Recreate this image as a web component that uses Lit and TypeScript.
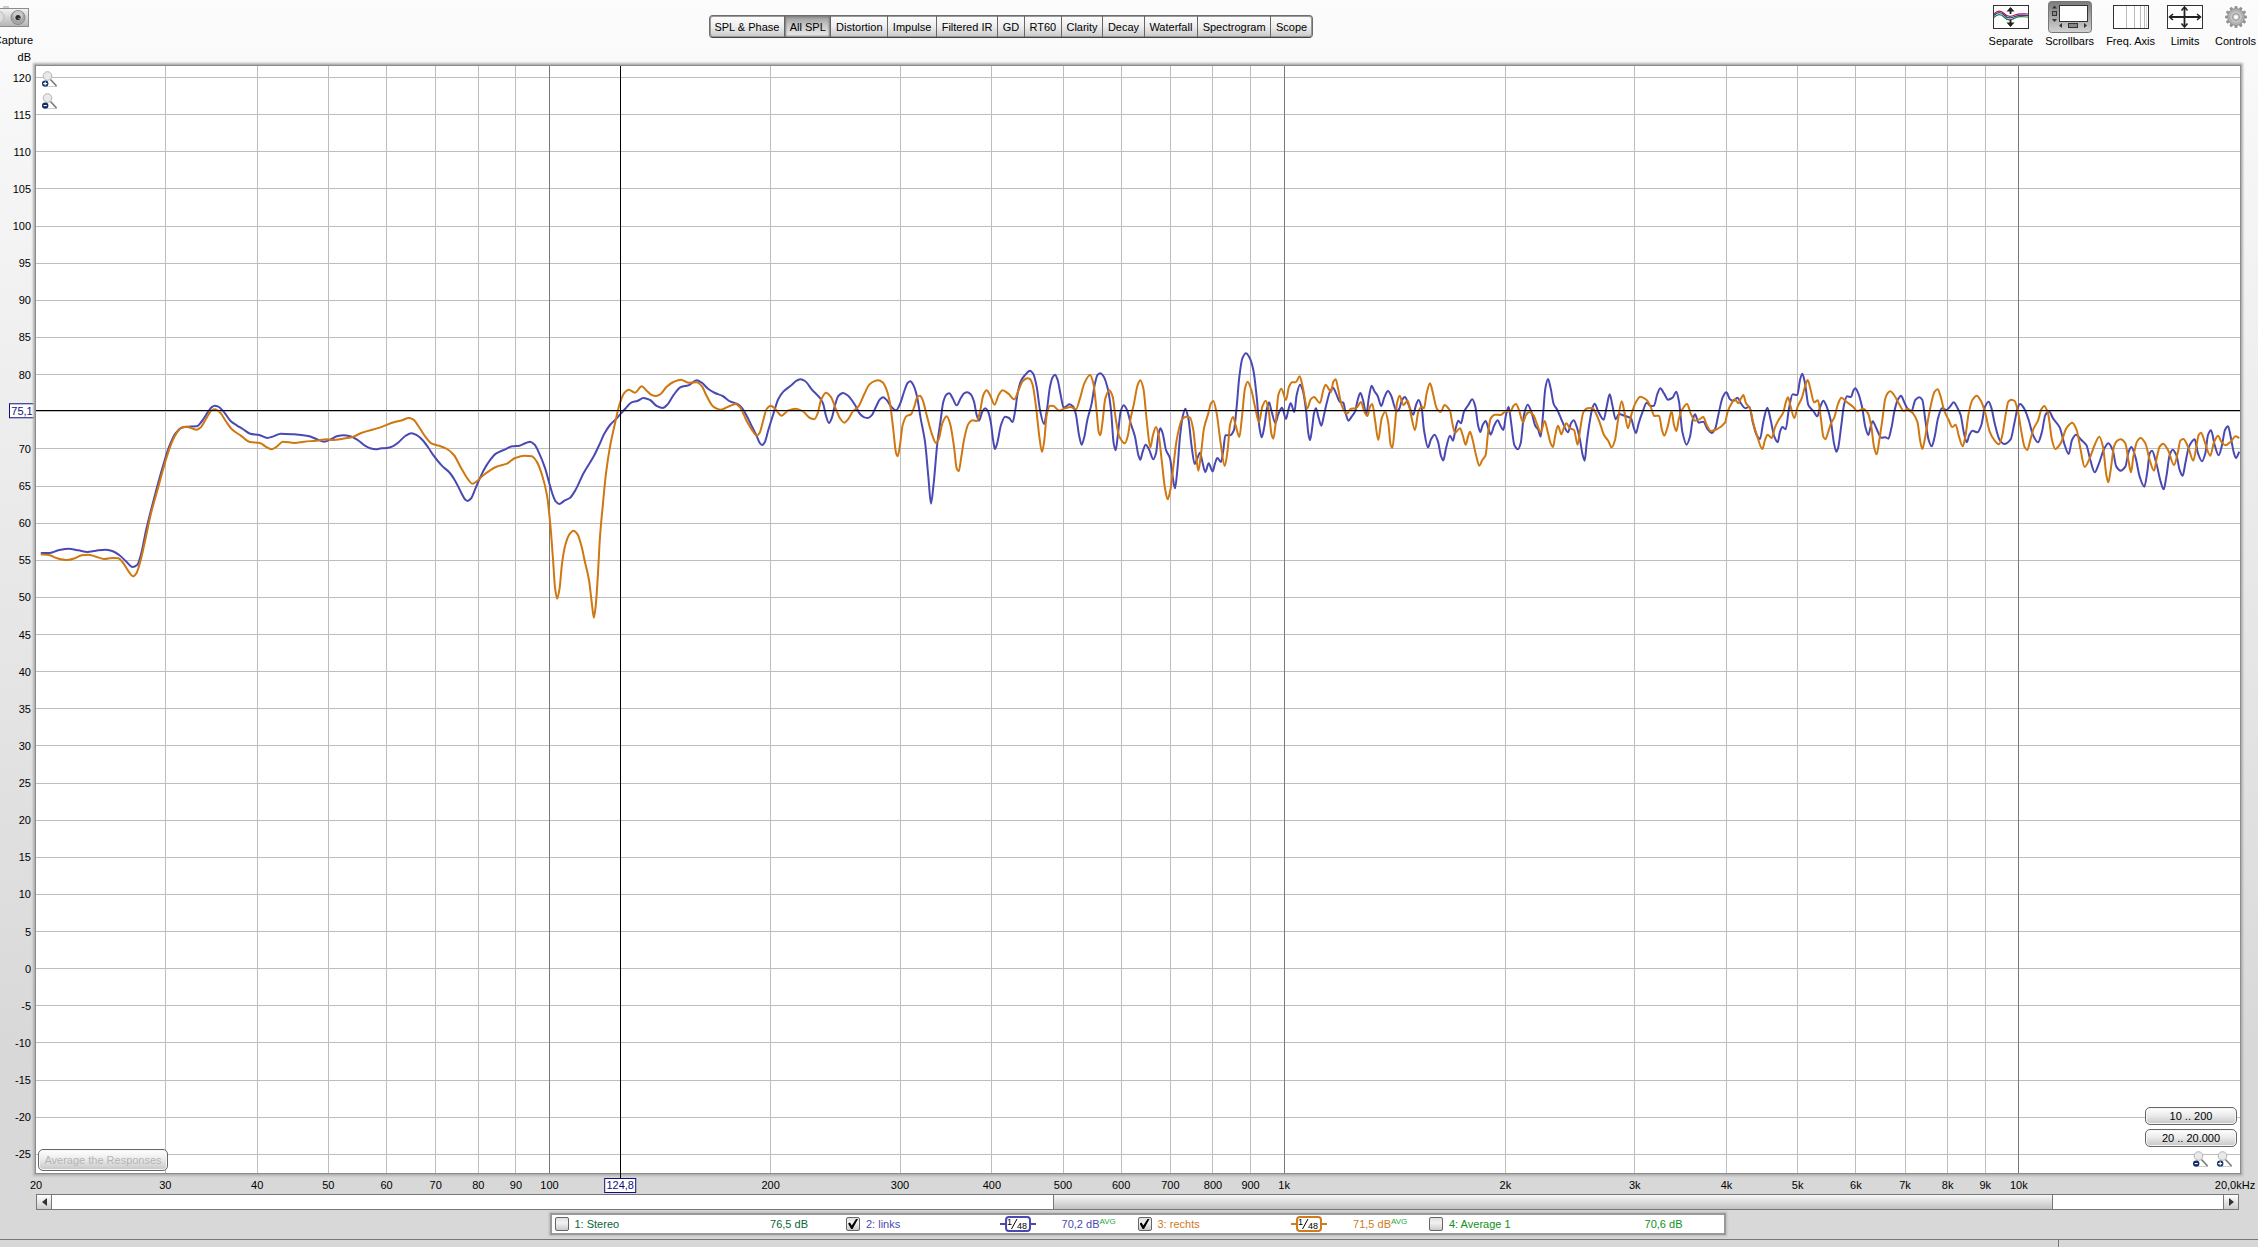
import { LitElement, html, svg, css } from "lit";
import { customElement, property, state } from "lit/decorators.js";
import { classMap } from "lit/directives/class-map.js";

/* ---------- axis scales ---------- */
const F_MIN = 20;
const DECADES = 3;
const DB_TOP = 121.56;
const DB_SPAN = 149.07;
const fx = (f: number) => `${((Math.log10(f / F_MIN) / DECADES) * 100).toFixed(3)}%`;
const fy = (db: number) => `${(((DB_TOP - db) / DB_SPAN) * 100).toFixed(3)}%`;

const LEVELS = Array.from({ length: 30 }, (_, i) => 120 - i * 5);
const FREQS: [number, string][] = [
  ...[20, 30, 40, 50, 60, 70, 80, 90, 100, 200, 300, 400, 500, 600, 700, 800, 900].map(
    (f) => [f, String(f)] as [number, string]
  ),
  ...[1, 2, 3, 4, 5, 6, 7, 8, 9, 10].map((k) => [k * 1000, `${k}k`] as [number, string]),
];
const CURSOR = { freq: 124.8, level: 75.2, freqText: "124,8", levelText: "75,1" };

/* ---------- sweep data: bands of "x,y" samples in trace units ---------- */
interface Band { x: number; k: number; pts: string }
const TRACE_Y = 1020;
const TRACE_BOX = "108 198 6612 3321";

const LEFT: Band[] = [
  { x: 0, k: 1.2245, pts: "100,639 122,639 145,630 168,626 192,631 214,636 235,632 258,629 275,633 292,645 308,663 325,681 336,675 345,645 358,570 370,510 385,440 400,375 415,318 430,280 445,263 460,260 482,259 495,243 510,215 518,202 526,197 535,200 548,215 565,243 580,256 595,267 613,281 635,285 655,294 670,289 688,281 720,283 755,288 775,297 795,305 812,297 825,289 842,286 858,289 875,299 893,316 907,325 920,328 935,325 948,324 962,319 978,305 993,288 1008,280 1022,286 1035,300 1050,324 1062,346 1085,380 1100,396 1115,422 1130,458 1140,479 1146,483 1154,475 1165,445 1180,403 1195,370 1215,341 1238,328 1255,319 1273,317 1288,309 1299,305 1309,313 1320,337 1335,383 1347,435 1355,467 1362,485 1370,492 1383,482 1396,474 1410,450 1430,399 1455,348" },
  { x: 1800, k: 1, pts: "0,310 12,283 30,255 50,235 75,207 95,187 112,183 130,174 150,180 170,198 188,204 203,193 220,166 243,141 265,136 290,121 305,128 325,147 345,159 368,168 390,184 412,192 425,203 440,227 455,258 470,288 480,310 487,315 495,305 505,270 520,222 535,177 550,155 575,135 590,122 602,118 615,123 635,148 662,177 670,193 678,228 687,249 696,232 704,199 715,168 729,159 745,168 765,195 780,222 793,232 804,234 815,226 828,200 840,178 849,172 860,180 872,198 888,211 900,192 913,153 923,129 931,124 940,135 950,165 962,235 975,305 985,410 993,491 1001,430 1012,310 1022,240 1030,185 1040,163 1048,160 1058,175 1070,196 1082,175 1092,160 1102,157 1112,163 1122,185 1130,225 1137,242 1147,215 1156,205 1164,214 1172,245 1180,305 1185,327 1192,308 1203,255 1215,230 1227,234 1238,246 1245,215 1253,160 1262,125 1275,105" },
  { x: 3090, k: 1, pts: "0,92 10,102 20,140 30,210 42,252 50,215 60,140 68,112 75,104 83,120 92,165 101,203 110,198 118,193 130,200 138,225 147,285 155,314 163,290 172,240 185,190 195,130 203,104 211,100 220,108 233,145 243,210 251,310 257,331 263,290 272,215 281,196 291,210 302,250 315,290 325,345 331,359 338,335 347,314 357,328 370,358 378,340 385,285 391,265 398,280 408,330 420,355 428,410 435,445 442,390 450,290 458,230 466,206 475,235 485,320 494,372 502,355 510,338 517,365 526,396 536,370 548,394 555,370 562,354 573,366 580,330 586,286 600,286 612,270 620,200 628,110 637,55 648,40 658,52 670,90 680,170 688,260 695,292 703,260 710,210 717,187 725,215 736,249 745,222 756,203 768,237 775,210 782,190 793,216 800,165 810,134 818,150 828,210 835,280 840,301 847,260 852,220 858,205 865,230 874,257 882,225 890,190 900,155 909,143 918,160 930,186 940,188 947,220 955,242 965,230 975,215 983,180 991,159 999,180 1009,222 1017,170 1025,137 1033,153 1043,168 1054,198 1063,172 1074,153 1084,168 1092,195 1100,214 1108,206 1116,180 1125,171 1135,192 1150,224 1158,195 1166,180 1175,205 1182,270 1194,322 1203,298 1214,284 1224,305 1233,348 1240,361 1248,325" },
  { x: 4350, k: 1, pts: "0,287 9,302 17,265 25,242 33,250 42,215 55,195 67,178 76,200 84,255 91,276 98,255 107,243 115,265 122,284 132,258 143,241 152,258 160,270 168,225 176,200 183,245 193,315 204,328 212,310 222,225 233,194 244,215 256,258 264,268 272,290 279,225 286,145 294,117 302,145 311,192 322,210 337,245 354,277 363,250 371,241 380,260 390,300 398,345 404,362 410,310 420,240 427,205 434,191 445,215 461,239 470,200 479,163 487,195 497,238 507,222 522,227 543,235 551,262 558,279 566,250 578,215 590,188 602,198 612,197 622,162 631,145 642,160 654,179 668,173 679,155 687,185 697,275 710,314 720,290 728,240 735,223 746,248 760,245 773,268 785,279 795,268 805,225 818,172 829,157 840,178 850,183 862,173 874,192 886,205 898,200 908,245 920,285 930,297 940,245 952,203 962,240 973,290 983,307 990,275 997,261 1007,268 1017,205 1028,163 1042,165 1050,120 1057,101 1065,130 1075,195 1090,213 1102,229 1111,200 1120,182 1130,200 1142,240 1152,310 1159,335" },
  { x: 5514, k: 1, pts: "0,325 10,255 18,195 27,169 39,171 46,152 52,145 60,158 72,200 82,260 91,285 98,260 104,244 115,265 130,293 142,292 151,296 160,265 170,210 180,178 189,167 198,185 208,205 220,215 232,180 244,172 253,180 262,240 272,300 281,319 290,290 300,235 312,205 325,210 336,200 347,187 358,203 368,225 377,275 386,307 394,285 403,272 418,277 430,255 441,200 452,185 460,203 470,250 485,300 499,312 518,298 530,245 540,200 547,192 558,205 572,240 585,285 600,307 612,275 622,225 633,214 645,235 665,262 680,315 692,342 702,300 714,284 730,300 745,315 757,360 770,397 783,370 797,330 811,310 824,330 835,380 848,392 862,380 872,335 880,321 892,350 905,410 919,440 928,395 935,340 942,332 955,370 968,425 977,448 985,410 995,345 1004,329 1015,345 1025,390 1034,407 1042,370 1053,320 1070,298 1080,340 1092,364 1102,340 1110,285 1119,271 1130,315 1142,346 1152,315 1161,270 1170,259 1178,290 1188,340 1194,354 1204,335" },
];

const RIGHT: Band[] = [
  { x: 0, k: 1.2245, pts: "100,643 122,646 140,655 165,660 185,654 200,646 216,644 235,650 255,657 275,654 290,655 300,666 315,694 326,709 334,700 343,668 355,605 370,520 388,440 405,365 420,310 435,275 445,263 456,260 468,264 482,269 492,262 505,236 518,212 527,208 538,216 553,243 568,268 590,287 612,306 637,309 650,319 665,328 678,320 693,305 722,309 745,305 775,302 800,298 818,300 840,296 862,292 885,279 930,263 965,247 985,241 1001,234 1012,238 1025,258 1042,290 1058,311 1075,317 1095,327 1112,345 1128,380 1145,415 1157,431 1168,424 1185,405 1215,381 1242,371 1262,354 1285,347 1303,349 1315,365 1328,405 1340,465 1348,550 1355,660 1360,745 1365,776 1371,745 1377,670 1385,615 1395,583 1405,572 1415,583 1425,620 1433,665 1443,720 1450,790 1455,833 1460,790 1465,700" },
  { x: 1800, k: 1, pts: "0,590 8,500 18,400 30,320 45,250 58,195 72,160 86,149 105,158 125,139 140,152 155,165 168,168 182,162 200,140 220,126 243,119 265,128 290,127 305,138 320,168 340,200 362,209 385,200 407,192 420,202 440,243 458,273 470,287 479,278 490,240 500,207 512,197 525,206 545,227 565,211 587,206 610,215 630,234 643,238 653,220 663,180 678,158 692,170 708,208 720,235 733,248 745,237 758,215 775,200 793,162 808,134 822,124 835,121 848,127 860,150 870,190 880,270 888,338 893,349 900,315 908,255 920,228 933,223 943,200 952,171 960,167 968,180 980,225 995,280 1008,309 1017,295 1027,250 1040,229 1050,250 1062,320 1070,385 1076,394 1084,350 1093,295 1105,252 1118,241 1131,243 1140,215 1150,165 1160,151 1170,165 1184,194 1196,165 1208,151 1225,161 1243,178 1255,152 1268,124 1282,115" },
  { x: 3090, k: 1, pts: "0,117 8,135 18,200 28,290 36,336 43,300 50,225 60,197 70,198 88,212 105,205 122,201 138,208 150,175 163,130 180,105 190,130 200,215 206,275 211,286 217,250 226,175 238,151 248,170 257,235 268,290 285,310 294,285 302,235 312,190 323,135 331,121 340,145 350,240 361,322 369,285 378,261 386,285 395,360 405,445 413,478 421,450 430,380 440,300 455,240 468,230 480,233 490,270 498,345 505,392 512,350 522,265 535,220 543,190 550,183 560,220 572,310 584,378 593,330 600,255 609,231 618,260 628,291 636,230 645,145 653,125 664,150 675,200 687,246 697,200 707,182 715,205 725,285 730,296 737,250 745,165 754,146 768,180 777,140 787,127 797,127 809,109 818,140 832,205 842,178 852,171 870,189 880,150 887,134 895,145 903,156 910,125 917,118 925,150 935,195 950,222 963,206 978,205 993,186 1003,215 1012,228 1020,200 1027,192 1035,240 1045,300 1055,235 1066,215 1075,250 1082,315 1087,324 1094,265 1101,190 1109,167 1120,195 1133,182 1143,225 1155,270 1165,215 1175,200 1182,205 1190,160 1200,130 1210,165 1220,205 1232,216 1244,195 1256,206" },
  { x: 4350, k: 1, pts: "0,212 7,250 15,278 30,265 38,285 47,314 54,290 60,275 68,300 78,345 88,377 97,360 107,345 114,280 122,235 135,224 152,225 168,213 182,214 190,198 198,192 207,210 219,247 228,225 238,216 250,225 262,255 272,277 284,243 293,275 302,310 309,321 316,285 324,257 334,283 342,262 349,250 360,265 372,270 383,314 391,265 400,217 412,205 427,204 440,225 450,250 462,285 475,303 485,322 495,300 504,240 515,184 524,220 534,265 545,220 557,188 571,170 590,180 602,200 613,228 627,227 636,270 643,287 653,260 665,214 672,255 679,273 687,235 697,208 711,192 722,220 735,242 748,238 760,231 770,255 783,273 800,268 825,248 833,215 845,190 854,178 865,190 873,175 880,165 888,190 900,206 910,250 922,290 937,327 945,300 953,284 965,294 975,262 987,238 1000,217 1008,185 1014,172 1022,200 1033,234 1043,200 1055,175 1065,140 1073,120 1082,150 1092,187 1104,181 1112,230 1120,290 1126,298 1135,275 1143,250 1153,232" },
  { x: 5514, k: 1, pts: "0,192 10,173 25,185 45,200 58,214 75,206 90,220 100,260 108,320 116,343 124,300 133,240 142,175 150,158 157,154 168,165 185,195 198,214 208,206 225,220 238,245 247,305 253,327 260,300 270,240 282,180 290,155 299,148 308,170 318,210 332,240 343,261 353,254 363,290 374,319 382,290 392,220 403,180 416,167 430,185 442,220 455,275 470,302 483,313 492,290 502,230 511,185 520,179 530,183 540,215 550,275 560,322 568,330 577,300 587,265 600,242 610,208 619,198 630,220 642,300 652,327 668,310 685,265 703,248 716,270 728,330 740,381 755,355 770,315 784,290 795,320 805,405 811,427 818,390 828,320 838,302 848,298 862,310 872,365 879,397 886,350 897,305 908,294 922,310 935,360 948,392 957,350 965,320 975,311 990,330 1008,375 1020,335 1027,302 1036,297 1050,320 1066,362 1075,320 1082,285 1089,278 1100,305 1117,347 1127,310 1140,287 1150,305 1162,316 1178,305 1193,289 1204,294" },
];

/** Monotone cubic through all samples, so peaks and dips stay where they were measured. */
function tracePath(bands: Band[]): string {
  const p = bands.flatMap((b) =>
    b.pts.split(" ").map((s) => {
      const [x, y] = s.split(",").map(Number);
      return [b.x + x * b.k, y + TRACE_Y];
    })
  );
  const n = p.length;
  const d: number[] = [];
  for (let i = 0; i < n - 1; i++) d.push((p[i + 1][1] - p[i][1]) / (p[i + 1][0] - p[i][0]));
  const m = p.map((_, i) => {
    if (i === 0) return d[0];
    if (i === n - 1) return d[n - 2];
    return d[i - 1] * d[i] <= 0 ? 0 : (2 * d[i - 1] * d[i]) / (d[i - 1] + d[i]);
  });
  let out = `M${p[0][0].toFixed(1)} ${p[0][1]}`;
  for (let i = 0; i < n - 1; i++) {
    const h = (p[i + 1][0] - p[i][0]) / 3;
    out += `C${(p[i][0] + h).toFixed(1)} ${(p[i][1] + m[i] * h).toFixed(1)} ${(p[i + 1][0] - h).toFixed(1)} ${(p[i + 1][1] - m[i + 1] * h).toFixed(1)} ${p[i + 1][0].toFixed(1)} ${p[i + 1][1]}`;
  }
  return out;
}
const LEFT_PATH = tracePath(LEFT);
const RIGHT_PATH = tracePath(RIGHT);

/* ---------- icons ---------- */
const zoomIcon = (plus: boolean) => html`<svg width="16" height="17" viewBox="0 0 16 17" aria-hidden="true">
  <path d="M5 15.5H15" stroke="#ccc" />
  <path d="M8.500 8.500L14.500 15" stroke="#777" stroke-width="1.600" />
  <circle cx="5.500" cy="5" r="4.300" fill="#e9e9e9" stroke="#b4b4b4" />
  <circle cx="3.200" cy="12.600" r="3.200" fill="#0d2a66" />
  <path d=${plus ? "M1.200 12.600H5.200M3.200 10.600V14.600" : "M1.600 12.600H4.800"} stroke="#fff" stroke-width="1.100" />
</svg>`;

const cameraIcon = html`<svg width="40" height="22" viewBox="0 0 40 22" aria-hidden="true">
  <defs><linearGradient id="cam" x2="0" y2="1"><stop stop-color="#f4f4f4" /><stop offset="1" stop-color="#b4b4b4" /></linearGradient></defs>
  <rect x="14" y="0" width="6" height="3" fill="#ccc" />
  <rect x="1" y="2.500" width="38.500" height="18" fill="url(#cam)" stroke="#8c8c8c" />
  <circle cx="9" cy="11" r="6" fill="#ddd" stroke="#bbb" />
  <circle cx="29" cy="11.500" r="7" fill="#a6a6a6" stroke="#8a8a8a" />
  <circle cx="29" cy="9.500" r="4.800" fill="#c9c9c9" />
  <circle cx="29" cy="11.500" r="2.600" fill="#2b2b2b" /><circle cx="30" cy="12.500" r=".8" fill="#aaa" />
</svg>`;

const separateIcon = html`<svg width="36" height="24" viewBox="0 0 36 24" aria-hidden="true">
  <rect x=".5" y=".5" width="35" height="23" fill="#fff" stroke="#333" />
  <g fill="none" stroke-width="1.200">
    <path d="M1 9C4 5.500 8 5 11 8.500S18 12 22 10S30 9 35 9" stroke="#c0143c" />
    <path d="M1 10.500C4 7 8 6.500 11 10S18 13.500 22 11.500S30 10.500 35 10.500" stroke="#2a3f9e" />
    <path d="M1 12.500C4 9 8 8.500 11 12S18 15.500 22 13S30 12 35 12" stroke="#1f7a3c" />
  </g>
  <path d="M17.500 3V9M17.500 15V21" stroke="#222" stroke-width="1.800" />
  <path d="M13.500 6.500L17.500 2L21.500 6.500zM13.500 17.500L17.500 22L21.500 17.500z" fill="#222" />
</svg>`;

const scrollbarsIcon = html`<svg width="44" height="32" viewBox="0 0 44 32" aria-hidden="true">
  <defs><linearGradient id="sb" x2="0" y2="1"><stop stop-color="#7b7b7b" /><stop offset=".5" stop-color="#a6a6a6" /><stop offset="1" stop-color="#d2d2d2" /></linearGradient></defs>
  <rect x=".5" y=".5" width="43" height="31" rx="3" fill="url(#sb)" stroke="#777" />
  <rect x="11.500" y="4.500" width="28" height="16" fill="#fff" stroke="#333" />
  <rect x="4.500" y="10.500" width="4" height="4" fill="#888" stroke="#333" />
  <rect x="20.500" y="22.500" width="9" height="4" fill="#888" stroke="#333" />
  <path d="M4 7.500L6.500 4.500L9 7.500zM4 18L6.500 21L9 18zM14 22L11 24.500L14 27zM36 22L39 24.500L36 27z" fill="#333" />
</svg>`;

const freqIcon = html`<svg width="36" height="24" viewBox="0 0 36 24" aria-hidden="true">
  <rect x=".5" y=".5" width="35" height="23" fill="#fff" stroke="#333" />
  <path d="M13.500 1V23M21.500 1V23M27.500 1V23M31.500 1V23" stroke="#bbb" /><path d="M33.500 1V23" stroke="#ddd" />
</svg>`;

const limitsIcon = html`<svg width="36" height="24" viewBox="0 0 36 24" aria-hidden="true">
  <rect x=".5" y=".5" width="35" height="23" fill="#fff" stroke="#333" />
  <path d="M3 12H33M17.500 3V21" stroke="#222" stroke-width="1.800" />
  <path d="M6 9L2.500 12L6 15M30 9L33.500 12L30 15M14.500 5.500L17.500 2L20.500 5.500M14.500 18.500L17.500 22L20.500 18.500" fill="none" stroke="#222" stroke-width="1.600" />
</svg>`;

const gearIcon = html`<svg width="24" height="24" viewBox="0 0 24 24" aria-hidden="true">
  ${Array.from({ length: 12 }, (_, i) => svg`<rect x="10.500" y="1" width="3" height="5" rx="1" fill="#929292" transform="rotate(${i * 30} 12 12)"></rect>`)}
  <circle cx="12" cy="12" r="8.400" fill="#b2b2b2" stroke="#929292" />
  <circle cx="12" cy="12" r="5.500" fill="#c6c6c6" />
  <circle cx="12" cy="12" r="3.400" fill="#d6d6d6" stroke="#909090" />
  <circle cx="12" cy="12" r="1.800" fill="#fff" />
</svg>`;

const shared = css`
  * { box-sizing: border-box; }
  button, input { font: inherit; color: inherit; margin: 0; padding: 0; }
  svg { display: block; }
`;

/* ---------- tab strip ---------- */
@customElement("graph-tabs")
class GraphTabs extends LitElement {
  @state() private current = "All SPL";
  private tabs = ["SPL & Phase", "All SPL", "Distortion", "Impulse", "Filtered IR", "GD", "RT60", "Clarity", "Decay", "Waterfall", "Spectrogram", "Scope"];
  static styles = [shared, css`
    :host { display: block; }
    .tabs { display: flex; min-width: 604px; height: 23px; border: 1px solid #6e6e6e; border-bottom-color: #444; border-radius: 4px; overflow: hidden; box-shadow: inset 0 0 0 1px #999; background: linear-gradient(#fdfdfd, #eee 50%, #c8c8c8); }
    .tab { flex: 1 0 auto; border: 0; border-left: 1px solid #666; padding: 0 4px; background: none; white-space: nowrap; }
    .tab:first-child { border-left: 0; }
    .tab.on { background: linear-gradient(#979797, #c4c4c4 40%, #eee); box-shadow: inset 0 0 2px 1px #777; }
  `];
  render() {
    return html`<nav class="tabs" aria-label="Graphs">
      ${this.tabs.map((t) => html`<button class=${classMap({ tab: true, on: t === this.current })} @click=${() => (this.current = t)}>${t}</button>`)}
    </nav>`;
  }
}

/* ---------- plot with its axes ---------- */
@customElement("spl-plot")
class SplPlot extends LitElement {
  static styles = [shared, css`
    :host { display: grid; grid-template-columns: 36px 1fr 18px; grid-template-rows: 16px 1fr 21px; min-height: 0; }
    .unit { grid-area: 1 / 1; text-align: right; padding-right: 5px; line-height: 14px; }
    .axis { overflow: visible; width: 100%; height: 100%; }
    .axis text { fill: #000; }
    .levels { grid-area: 2 / 1; min-height: 0; }
    .freqs { grid-area: 3 / 2; z-index: 1; }
    .end { text-anchor: end; }
    .mid { text-anchor: middle; }
    .axis .tag { fill: #10107a; }
    .tagbox { fill: #fff; stroke: #10107a; }
    .cursor { stroke: #000; shape-rendering: crispEdges; }
    .plot { grid-area: 2 / 2; position: relative; min-height: 0; background: #fff; box-shadow: 0 0 1px 1px #8c8c8c, 0 0 2px 3px #b4b4b4; }
    .chart { position: absolute; inset: 0; width: 100%; height: 100%; }
    .grid { stroke: #bdbdbd; shape-rendering: crispEdges; }
    .grid.decade { stroke: #787878; }
    .trace { fill: none; stroke-width: 2px; vector-effect: non-scaling-stroke; stroke-linejoin: round; }
    .trace.left { stroke: #4a49b3; }
    .trace.right { stroke: #cf7710; }
    .zoomy { position: absolute; left: 6px; top: 5px; display: grid; gap: 5px; }
    .icon { border: 0; background: none; display: block; }
    .btn { border: 1px solid #666; border-radius: 5px; background: linear-gradient(#fff, #ececec 45%, #c6c6c6); box-shadow: inset 0 0 0 1px #f6f6f6; height: 18px; }
    .average { position: absolute; left: 2px; bottom: 2px; height: 22px; width: 130px; white-space: nowrap; color: #b4b4b4; }
    .ranges { position: absolute; right: 3px; bottom: 5px; width: 92px; display: grid; gap: 4px; }
    .zoomx { display: flex; justify-content: flex-end; gap: 8px; padding-right: 4px; }
  `];
  render() {
    return html`
      <div class="unit">dB</div>
      <div class="levels"><svg class="axis" aria-label="Level axis">
        ${LEVELS.map((l) => (l === 75 ? null : svg`<text class="end" x="31" y=${fy(l)} dy="4">${l}</text>`))}
        <svg class="axis" y=${fy(CURSOR.level)} height="1">
          <rect class="tagbox" x="9.5" y="-6.5" width="25" height="14"></rect>
          <text class="tag mid" x="22" y="5">${CURSOR.levelText}</text>
        </svg>
      </svg></div>
      <div class="plot">
        <svg class="chart" aria-label="SPL over frequency">
          ${LEVELS.map((l) => svg`<line class="grid" x1="0" x2="100%" y1=${fy(l)} y2=${fy(l)}></line>`)}
          ${FREQS.slice(1).map(([f]) => svg`<line class=${classMap({ grid: true, decade: [100, 1000, 10000].includes(f) })} y1="0" y2="100%" x1=${fx(f)} x2=${fx(f)}></line>`)}
          <svg viewBox=${TRACE_BOX} width="100%" height="100%" preserveAspectRatio="none">
            <path class="trace left" d=${LEFT_PATH}></path>
            <path class="trace right" d=${RIGHT_PATH}></path>
          </svg>
          <line class="cursor" x1="0" x2="100%" y1=${fy(CURSOR.level)} y2=${fy(CURSOR.level)}></line>
          <line class="cursor" y1="0" y2="100%" x1=${fx(CURSOR.freq)} x2=${fx(CURSOR.freq)}></line>
        </svg>
        <div class="zoomy">
          <button class="icon" aria-label="Zoom in level">${zoomIcon(true)}</button>
          <button class="icon" aria-label="Zoom out level">${zoomIcon(false)}</button>
        </div>
        <button class="btn average" disabled>Average the Responses</button>
        <div class="ranges">
          <button class="btn">10 .. 200</button>
          <button class="btn">20 .. 20.000</button>
          <div class="zoomx">
            <button class="icon" aria-label="Zoom out frequency">${zoomIcon(false)}</button>
            <button class="icon" aria-label="Zoom in frequency">${zoomIcon(true)}</button>
          </div>
        </div>
      </div>
      <svg class="axis freqs" aria-label="Frequency axis">
        ${FREQS.map(([f, t]) => svg`<text class="mid" x=${fx(f)} y="16">${t}</text>`)}
        <text class="mid" x="100%" dx="-5" y="16">20,0kHz</text>
        <line class="cursor" x1=${fx(CURSOR.freq)} x2=${fx(CURSOR.freq)} y1="0" y2="5"></line>
        <svg class="axis" x=${fx(CURSOR.freq)} width="1">
          <rect class="tagbox" x="-15.5" y="5.5" width="31" height="14"></rect>
          <text class="tag mid" x="0" y="16">${CURSOR.freqText}</text>
        </svg>
      </svg>`;
  }
}

/* ---------- horizontal scroll bar ---------- */
@customElement("range-scroller")
class RangeScroller extends LitElement {
  static styles = [shared, css`
    :host { display: block; }
    .bar { display: flex; height: 16px; border: 1px solid #777; background: #fff; }
    .step { flex: none; width: 15px; border: 0; background: linear-gradient(#fff, #ccc); display: grid; place-items: center; }
    .back { border-right: 1px solid #777; }
    .next { border-left: 1px solid #777; }
    .track { flex: 1; display: grid; grid-template-columns: 1001fr 1000fr 170fr; }
    .thumb { grid-column: 2; border: solid #777; border-width: 0 1px; background: linear-gradient(#f8f8f8, #e2e2e2 40%, #c2c2c2); }
  `];
  render() {
    return html`<div class="bar">
      <button class="step back" aria-label="Scroll left"><svg width="5" height="8"><path d="M5 0V8L0 4z" fill="#333" /></svg></button>
      <div class="track"><div class="thumb"></div></div>
      <button class="step next" aria-label="Scroll right"><svg width="5" height="8"><path d="M0 0V8L5 4z" fill="#333" /></svg></button>
    </div>`;
  }
}

/* ---------- one legend entry ---------- */
interface Entry { id: string; name: string; value: string; tone: string; on: boolean; smooth: boolean }

@customElement("trace-entry")
class TraceEntry extends LitElement {
  @property({ attribute: false }) entry!: Entry;
  static styles = [shared, css`
    :host { display: block; flex: 1; min-width: 0; }
    .row { display: grid; grid-template-columns: 14px 1fr 36px 64px 38px; align-items: center; height: 18px; }
    .stereo { color: #0b6638; }
    .links { color: #4a49b3; }
    .rechts { color: #cf7a1c; }
    .average { color: #109020; }
    .box { appearance: none; width: 14px; height: 14px; border: 1px solid #666; border-radius: 2px; background: linear-gradient(#e0e0e0, #f2f2f2 40%, #cbcbcb); display: grid; place-items: center; }
    .box:checked::before { content: ""; width: 10px; height: 10px; background: #000; clip-path: polygon(0 45%, 20% 35%, 38% 65%, 80% 0, 100% 0, 45% 100%, 32% 100%); }
    .name { padding-left: 6px; white-space: nowrap; }
    .value { grid-column: 4; text-align: right; white-space: nowrap; }
    .avg { font-size: 8px; line-height: 8px; color: #2aa83a; align-self: start; padding-top: 3px; }
    .smooth text { fill: #000; font-size: 9px; }
  `];
  render() {
    const e = this.entry;
    return html`<div class="row ${e.tone}">
      <input class="box" type="checkbox" id=${e.id} .checked=${e.on} />
      <label class="name" for=${e.id}>${e.name}</label>
      ${e.smooth
        ? html`<svg class="smooth" width="36" height="18" viewBox="0 0 36 18" role="img" aria-label="1/48 octave smoothing">
            <path d="M0 9H6M30 9H36" stroke="currentColor" stroke-width="2" />
            <rect x="6" y="2" width="24" height="14" rx="3" fill="#fff" stroke="currentColor" stroke-width="2" />
            <text x="7" y="10">1</text><path d="M11.500 14L17 4" stroke="#000" /><text x="17" y="14">48</text>
          </svg>`
        : null}
      <span class="value">${e.value}</span>
      ${e.smooth ? html`<span class="avg">AVG</span>` : null}
    </div>`;
  }
}

@customElement("app-root")
class AppRoot extends LitElement {
  private entries: Entry[] = [
    { id: "t1", name: "1: Stereo", value: "76,5 dB", tone: "stereo", on: false, smooth: false },
    { id: "t2", name: "2: links", value: "70,2 dB", tone: "links", on: true, smooth: true },
    { id: "t3", name: "3: rechts", value: "71,5 dB", tone: "rechts", on: true, smooth: true },
    { id: "t4", name: "4: Average 1", value: "70,6 dB", tone: "average", on: false, smooth: false },
  ];
  private tools = [
    { label: "Separate", icon: separateIcon },
    { label: "Scrollbars", icon: scrollbarsIcon },
    { label: "Freq. Axis", icon: freqIcon },
    { label: "Limits", icon: limitsIcon },
    { label: "Controls", icon: gearIcon },
  ];
  static styles = [shared, css`
    :host { display: flex; flex-direction: column; height: 100vh; min-height: 480px; overflow: hidden; background: linear-gradient(#fcfcfc, #f6f6f6 12%, #d8d8d8 85%, #d8d8d8); font: 11px/14px "Liberation Sans", Arial, sans-serif; color: #000; }
    .head { display: flex; justify-content: space-between; align-items: flex-start; height: 50px; padding-right: 2px; }
    .side { width: 33px; overflow: hidden; display: flex; justify-content: flex-end; }
    .tool { border: 0; background: none; display: flex; flex-direction: column; align-items: center; white-space: nowrap; flex: none; }
    .pic { height: 34px; display: grid; place-items: center; }
    .side .tool { align-items: flex-end; }
    .side .pic { height: 33px; padding-right: 4px; }
    .tabs { margin-top: 15px; }
    .tools { display: flex; gap: 12px; }
    .plot { flex: 1; }
    .scroll { margin: 0 19px 0 36px; }
    .legend { display: flex; align-self: center; width: calc(100% - 55px); max-width: 1176px; margin: 3px 19px 4px 36px; padding: 0 3px; background: #fff; border: 2px solid #999; box-shadow: 0 0 2px 1px #bbb; }
    .foot { display: flex; height: 8px; border-top: 1px solid #777; }
    .foot-main { width: 2059px; max-width: 92%; border-right: 1px solid #777; }
  `];
  render() {
    return html`
      <header class="head">
        <div class="side"><button class="tool"><span class="pic">${cameraIcon}</span>Capture</button></div>
        <graph-tabs class="tabs"></graph-tabs>
        <div class="tools">
          ${this.tools.map((t) => html`<button class="tool"><span class="pic">${t.icon}</span>${t.label}</button>`)}
        </div>
      </header>
      <spl-plot class="plot"></spl-plot>
      <range-scroller class="scroll"></range-scroller>
      <div class="legend">${this.entries.map((e) => html`<trace-entry .entry=${e}></trace-entry>`)}</div>
      <footer class="foot"><div class="foot-main"></div></footer>`;
  }
}
